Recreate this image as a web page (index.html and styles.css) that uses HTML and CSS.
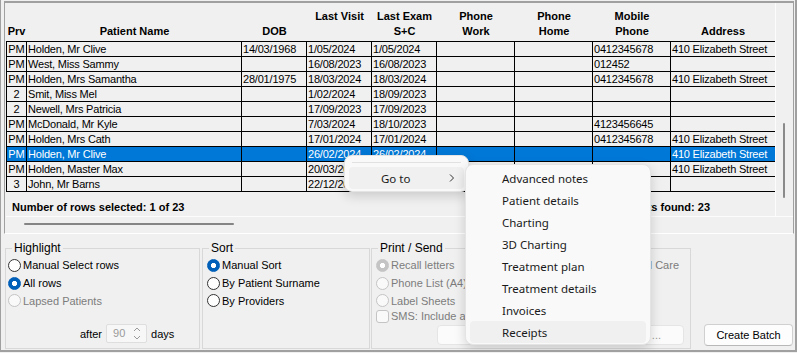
FILE: index.html
```html
<!DOCTYPE html>
<html lang="en">
<head>
  <meta charset="UTF-8">
  <title>Recall List</title>
  <link rel="stylesheet" href="styles.css">
</head>
<body>

<div class="window">

  <div class="grid-panel">
    <div class="grid-main">
      <div class="grid-view">
        <div class="grid-head">
          <div>Prv</div>
          <div>Patient Name</div>
          <div>DOB</div>
          <div>Last Visit<br>&nbsp;</div>
          <div>Last Exam<br>S+C</div>
          <div>Phone<br>Work</div>
          <div>Phone<br>Home</div>
          <div>Mobile<br>Phone</div>
          <div>Address</div>
        </div>

        <div class="grid-row"><div class="prv">PM</div><div>Holden, Mr Clive</div><div>14/03/1968</div><div>1/05/2024</div><div>1/05/2024</div><div></div><div></div><div>0412345678</div><div>410 Elizabeth Street</div></div>
        <div class="grid-row"><div class="prv">PM</div><div>West, Miss Sammy</div><div></div><div>16/08/2023</div><div>16/08/2023</div><div></div><div></div><div>012452</div><div></div></div>
        <div class="grid-row"><div class="prv">PM</div><div>Holden, Mrs Samantha</div><div>28/01/1975</div><div>18/03/2024</div><div>18/03/2024</div><div></div><div></div><div>0412345678</div><div>410 Elizabeth Street</div></div>
        <div class="grid-row"><div class="prv">2</div><div>Smit, Miss Mel</div><div></div><div>1/02/2024</div><div>18/09/2023</div><div></div><div></div><div></div><div></div></div>
        <div class="grid-row"><div class="prv">2</div><div>Newell, Mrs Patricia</div><div></div><div>17/09/2023</div><div>17/09/2023</div><div></div><div></div><div></div><div></div></div>
        <div class="grid-row"><div class="prv">PM</div><div>McDonald, Mr Kyle</div><div></div><div>7/03/2024</div><div>18/10/2023</div><div></div><div></div><div>4123456645</div><div></div></div>
        <div class="grid-row"><div class="prv">PM</div><div>Holden, Mrs Cath</div><div></div><div>17/01/2024</div><div>17/01/2024</div><div></div><div></div><div>0412345678</div><div>410 Elizabeth Street</div></div>
        <div class="grid-row selected"><div class="prv">PM</div><div>Holden, Mr Clive</div><div></div><div>26/02/2024</div><div>26/02/2024</div><div></div><div></div><div></div><div>410 Elizabeth Street</div></div>
        <div class="grid-row"><div class="prv">PM</div><div>Holden, Master Max</div><div></div><div>20/03/2024</div><div>20/03/2024</div><div></div><div></div><div></div><div>410 Elizabeth Street</div></div>
        <div class="grid-row"><div class="prv">3</div><div>John, Mr Barns</div><div></div><div>22/12/2023</div><div>22/12/2023</div><div></div><div></div><div></div><div></div></div>

        <div class="grid-status">
          <span>Number of rows selected: 1 of 23</span>
          <span>Number of patients found: 23</span>
        </div>
      </div>
      <div class="vscroll"><div class="vthumb"></div></div>
    </div>
    <div class="hscroll"><div class="hthumb"></div></div>
  </div>

  <div class="options">
    <fieldset class="group group-highlight">
      <legend>Highlight</legend>
      <div class="group-body">
        <label class="opt"><span class="radio"></span>Manual Select rows</label>
        <label class="opt"><span class="radio on"></span>All rows</label>
        <label class="opt short disabled"><span class="radio"></span>Lapsed Patients</label>
        <div class="after">
          <span>after</span>
          <span class="spin">
            <span class="spin-val">90</span>
            <span class="spin-btns">
              <svg width="8" height="5" viewBox="0 0 8 5"><path d="M1 4L4 1L7 4" fill="none" stroke="#9a9a9a" stroke-width="1"/></svg>
              <svg width="8" height="5" viewBox="0 0 8 5"><path d="M1 1L4 4L7 1" fill="none" stroke="#9a9a9a" stroke-width="1"/></svg>
            </span>
          </span>
          <span>days</span>
        </div>
      </div>
    </fieldset>

    <fieldset class="group group-sort">
      <legend>Sort</legend>
      <div class="group-body">
        <label class="opt"><span class="radio on"></span>Manual Sort</label>
        <label class="opt"><span class="radio"></span>By Patient Surname</label>
        <label class="opt short"><span class="radio"></span>By Providers</label>
      </div>
    </fieldset>

    <fieldset class="group group-print">
      <legend>Print / Send</legend>
      <div class="group-body">
        <div class="print-cols">
          <div>
            <label class="opt disabled"><span class="radio on"></span>Recall letters</label>
            <label class="opt disabled"><span class="radio"></span>Phone List (A4)</label>
            <label class="opt short disabled"><span class="radio"></span>Label Sheets</label>
            <label class="opt tiny disabled"><span class="check"></span>SMS: Include a link</label>
          </div>
          <div class="opt disabled">Aged Care</div>
        </div>
        <button class="button button-wide" disabled>Print / Send ...</button>
      </div>
    </fieldset>

    <button class="button button-batch">Create Batch</button>
  </div>

  <div class="menu">
    <div class="menu-sep"></div>
    <div class="menu-item hover">Go to
      <svg class="chevron" width="6" height="10" viewBox="0 0 6 10"><path d="M1 1.5L4.5 5L1 8.5" fill="none" stroke="#333" stroke-width="1"/></svg>
    </div>
  </div>

  <div class="submenu">
    <div class="menu-item">Advanced notes</div>
    <div class="menu-item">Patient details</div>
    <div class="menu-item">Charting</div>
    <div class="menu-item">3D Charting</div>
    <div class="menu-item">Treatment plan</div>
    <div class="menu-item">Treatment details</div>
    <div class="menu-item">Invoices</div>
    <div class="menu-item hover">Receipts</div>
  </div>

</div>

</body>
</html>
```

FILE: styles.css
```css
body {
  margin: 0;
  background: #f0f0f0;
  font-family: "Liberation Sans", Arial, sans-serif;
  font-size: 11px;
  color: #000;
}
.window {
  position: relative;
  width: 797px;
  height: 352px;
  box-sizing: border-box;
  padding-top: 1px;
  border-left: 1px solid #a0a0a0;
  border-right: 2px solid #a0a0a0;
  border-bottom: 2px solid #a0a0a0;
  overflow: hidden;
}

/* grid */
.grid-panel {
  margin: 0 1px 0 3px;
  padding-left: 1px;
  border-top: 2px solid #a0a0a0;
  border-left: 1px solid #a0a0a0;
  border-right: 1px solid #a0a0a0;
  border-bottom: 1px solid #fff;
}
.grid-main {
  display: flex;
  height: 213px;
  border-bottom: 1px solid #fcfcfc;
}
.grid-view {
  flex: none;
  width: 769px;
  overflow: hidden;
}
.grid-head, .grid-row {
  display: grid;
  grid-template-columns: 21px 215px 65px 65px 65px 78px 78px 78px 104px;
}
.grid-head {
  height: 39px;
  border-bottom: 1px solid #000;
  box-sizing: border-box;
  font-weight: bold;
  line-height: 15px;
}
.grid-head div {
  align-self: end;
  padding-bottom: 2px;
  text-align: center;
  white-space: nowrap;
}
.grid-row div {
  height: 15px;
  box-sizing: border-box;
  padding: 0 1px;
  line-height: 14px;
  letter-spacing: -0.2px;
  border-right: 1px solid #000;
  border-bottom: 1px solid #000;
  white-space: nowrap;
  overflow: hidden;
}
.grid-row div:first-child {
  border-left: 1px solid #000;
}
.grid-row div:last-child {
  border-right: none;
}
.grid-row .prv {
  text-align: center;
  letter-spacing: 0;
}
.grid-row.selected div {
  background: #0078d7;
  color: #fff;
}
.grid-status {
  display: flex;
  justify-content: space-between;
  height: 24px;
  box-sizing: border-box;
  padding: 8px 65px 0 6px;
  line-height: 14px;
  font-weight: bold;
}
.vscroll {
  flex: none;
  width: 18px;
  box-sizing: border-box;
  border-left: 1px solid #fcfcfc;
  padding: 120px 0 0 7px;
}
.vthumb {
  width: 2px;
  height: 75px;
  background: #8a8a8a;
  border-radius: 1px;
}
.hscroll {
  height: 16px;
  box-sizing: border-box;
  padding: 6px 0 0 18px;
}
.hthumb {
  width: 210px;
  height: 2px;
  background: #858585;
  border-radius: 1px;
}

/* option groups */
.options {
  display: flex;
  height: 116px;
  box-sizing: border-box;
  padding: 7px 2px 1px 4px;
}
.group {
  box-sizing: border-box;
  margin: 0;
  padding: 0;
  min-width: 0;
  border: 1px solid #d8d8d8;
}
.group legend {
  margin-left: 6px;
  padding: 0 2px;
  font-size: 12px;
  line-height: 14px;
}
.group-body {
  padding: 1px 0 0 2px;
}
.group-highlight {
  width: 195px;
}
.group-sort {
  width: 168px;
  margin-left: 2px;
}
.group-sort .group-body {
  padding-left: 4px;
}
.group-print {
  width: 320px;
  margin-left: 1px;
}
.group-print .group-body {
  padding: 1px 0 0 4px;
}
.opt {
  display: flex;
  align-items: center;
  gap: 2px;
  height: 18px;
  white-space: nowrap;
}
.opt.short {
  height: 17px;
}
.opt.tiny {
  height: 14px;
}
.disabled {
  color: #7c7c7c;
}
.radio {
  width: 13px;
  height: 13px;
  box-sizing: border-box;
  border: 1px solid #333;
  border-radius: 50%;
  background: #fff;
  flex-shrink: 0;
}
.radio.on {
  border-color: #005fb8;
  background: radial-gradient(circle, #fff 0 2.3px, #005fb8 2.9px);
}
.disabled .radio {
  border-color: #c4c4c4;
  background: #f9f9f9;
}
.disabled .radio.on {
  border-color: #c4c4c4;
  background: radial-gradient(circle, #fff 0 2.3px, #c4c4c4 2.9px);
}
.check {
  width: 13px;
  height: 13px;
  box-sizing: border-box;
  border: 1px solid #c4c4c4;
  border-radius: 3px;
  background: #f9f9f9;
}
.after {
  display: flex;
  align-items: center;
  gap: 4px;
  margin: 15px 0 0 72px;
}
.spin {
  display: flex;
  width: 41px;
  height: 19px;
  box-sizing: border-box;
  border: 1px solid #dedede;
  border-radius: 2px;
  background: #f7f7f7;
  color: #9a9a9a;
}
.spin-val {
  flex: 1;
  padding-left: 6px;
  line-height: 17px;
}
.spin-btns {
  display: flex;
  flex-direction: column;
  justify-content: center;
  gap: 3px;
  width: 13px;
  padding-left: 1px;
}
.print-cols {
  display: flex;
  justify-content: space-between;
  padding-right: 11px;
}
.button {
  font-family: "Liberation Sans", Arial, sans-serif;
  font-size: 11px;
  background: #fdfdfd;
  color: #000;
  border: 1px solid #d0d0d0;
  border-bottom-color: #b8b8b8;
  border-radius: 4px;
  padding: 0;
}
.button-wide {
  display: block;
  width: 247px;
  height: 20px;
  margin: 2px 0 0 61px;
  text-align: right;
  padding-right: 22px;
  background: #fbfbfb;
  border-color: #e5e5e5;
  color: #9a9a9a;
}
.button-batch {
  align-self: flex-end;
  margin: 0 0 3px auto;
  width: 89px;
  height: 22px;
}

/* context menu */
.menu, .submenu {
  position: absolute;
  box-sizing: border-box;
  background: #f9f9f9;
  border: 1px solid #e4e4e4;
  border-radius: 8px;
  box-shadow: 0 4px 12px rgba(0, 0, 0, 0.16);
  font-family: "Noto Sans", sans-serif;
  font-size: 11.5px;
  color: #1a1a1a;
}
.menu {
  left: 343px;
  top: 155px;
  width: 125px;
  height: 37px;
  padding: 6px 4px 0;
}
.menu-sep {
  height: 1px;
  margin: 0 3px 4px;
  background: #e1e1e1;
}
.menu-item {
  display: flex;
  align-items: center;
  height: 22px;
  padding-left: 32px;
  border-radius: 4px;
}
.menu-item.hover {
  background: #f0f0f0;
}
.chevron {
  margin-left: auto;
  margin-right: 9px;
}
.submenu {
  left: 464px;
  top: 164px;
  width: 186px;
  padding: 2px 4px 1px;
}
```
